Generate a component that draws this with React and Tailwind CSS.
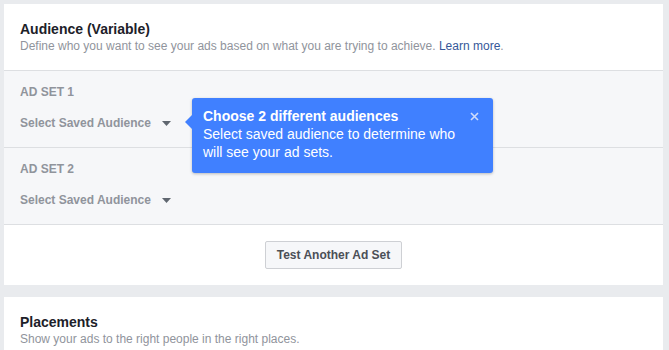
export default function App() {
  return (
    <div className="relative w-[669px] h-[350px] overflow-hidden bg-[#e9ebee] pt-1 pl-1 pr-[6px] font-['Liberation_Sans',Arial,sans-serif]">
      <div className="bg-white">
        <div className="px-4 pt-4 pb-4 border-b border-[#dddfe2]">
          <h2 className="text-[14px] leading-[18px] font-bold text-[#1d2129]">Audience (Variable)</h2>
          <p className="text-[12px] leading-4 text-[#90949c]">
            Define who you want to see your ads based on what you are trying to achieve.{" "}
            <a className="text-[#365899]">Learn more</a>.
          </p>
        </div>

        {[1, 2].map((n) => (
          <div key={n} className="bg-[#f6f7f9] border-b border-[#dddfe2] px-4 pt-[13px] pb-4">
            <div className="text-[12px] leading-4 font-bold text-[#90949c]">AD SET {n}</div>
            <div className="mt-[15px] flex items-center text-[12px] leading-4 font-bold text-[#90949c]">
              Select Saved Audience
              <svg className="ml-[11px]" width="9" height="5" viewBox="0 0 9 5">
                <path d="M0 0h9L4.5 5z" fill="#606770" />
              </svg>
            </div>
          </div>
        ))}

        <div className="flex justify-center pt-4 pb-4">
          <button className="h-[28px] px-[11px] rounded-[2px] border border-[#ced0d4] bg-[#f6f7f9] text-[12px] font-bold text-[#4b4f56]">
            Test Another Ad Set
          </button>
        </div>
      </div>

      <div className="mt-3 bg-white px-4 pt-4 pb-4">
        <h2 className="text-[14px] leading-[18px] font-bold text-[#1d2129]">Placements</h2>
        <p className="text-[12px] leading-4 text-[#90949c]">Show your ads to the right people in the right places.</p>
      </div>

      <div className="absolute left-[192px] top-[98px] w-[301px] h-[75px] rounded-[3px] bg-[#4080ff] shadow-[0_1px_3px_rgba(0,0,0,0.25)] pl-[11px] pt-[9px] text-white">
        <svg className="absolute -left-[7px] top-[17px]" width="7" height="14" viewBox="0 0 7 14">
          <path d="M7 0v14L0 7z" fill="#4080ff" />
        </svg>
        <svg className="absolute right-[14px] top-[14px]" width="9" height="9" viewBox="0 0 9 9">
          <path d="M1 1l7 7M8 1L1 8" stroke="#cfdcfa" strokeWidth="1.6" />
        </svg>
        <div className="text-[14px] leading-[18px] font-bold">Choose 2 different audiences</div>
        <div className="text-[14px] leading-[18px]">
          Select saved audience to determine who
          <br />
          will see your ad sets.
        </div>
      </div>
    </div>
  );
}
